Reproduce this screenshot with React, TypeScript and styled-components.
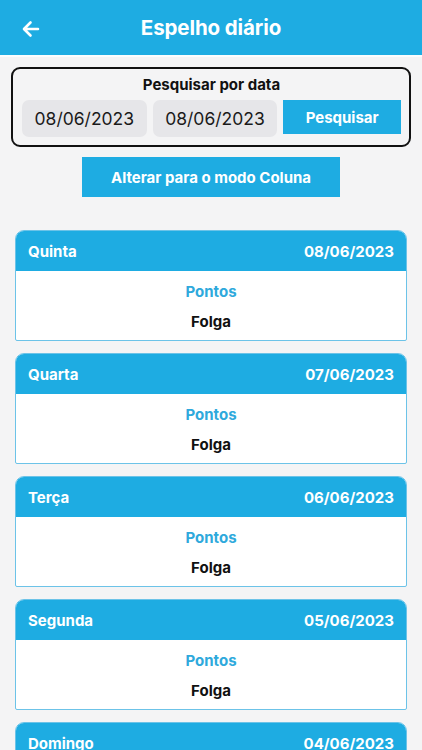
import styled, { createGlobalStyle } from "styled-components";
import React from "react";

const GlobalStyle = createGlobalStyle`
  html, body {
    margin: 0;
    padding: 0;
    background: #f4f4f5;
    overflow: hidden;
  }
  * {
    box-sizing: border-box;
  }
  body {
    font-family: Inter, "Noto Sans", "Liberation Sans", sans-serif;
    -webkit-font-smoothing: antialiased;
  }
`;

const blue = "#1eace2";

const Screen = styled.div`
  height: 750px;
  width: 422px;
  overflow: hidden;
  display: flex;
  flex-direction: column;
  background: #f4f4f5;
`;

const TopBar = styled.header`
  height: 57px;
  flex-shrink: 0;
  background: ${blue};
  border-bottom: 2px solid #fbfdfe;
  position: relative;
  display: flex;
  align-items: center;
  justify-content: center;
  h1 {
    margin: 0;
    color: #fff;
    font-size: 20.5px;
    font-weight: 700;
    letter-spacing: -0.1px;
  }
`;

const BackButton = styled.button`
  position: absolute;
  left: 19px;
  top: 17px;
  width: 24px;
  height: 24px;
  padding: 0;
  border: none;
  background: none;
  display: flex;
  align-items: center;
  justify-content: center;
`;

const Content = styled.main`
  display: flex;
  flex-direction: column;
  align-items: center;
  padding: 10px 11px 0;
`;

const SearchBox = styled.section`
  width: 400px;
  border: 2px solid #111;
  border-radius: 9px;
  padding: 6px 8px 8px 9px;
  display: flex;
  flex-direction: column;
  gap: 5px;
  h3 {
    margin: 0;
    text-align: center;
    font-size: 15px;
    font-weight: 700;
    color: #111;
    line-height: 20px;
  }
`;

const SearchRow = styled.div`
  display: flex;
  align-items: flex-start;
  gap: 6px;
`;

const DateInput = styled.div`
  width: 125px;
  height: 37px;
  border-radius: 7px;
  background: #e6e6e9;
  display: flex;
  align-items: center;
  justify-content: center;
  font-size: 17.5px;
  color: #1a1a1a;
`;

const BlueButton = styled.button<{ $width: number; $height: number }>`
  width: ${(p) => p.$width}px;
  height: ${(p) => p.$height}px;
  border: none;
  border-radius: 0;
  background: ${blue};
  color: #fff;
  font-family: inherit;
  font-size: 15px;
  font-weight: 700;
  padding: 0;
`;

const ModeButton = styled(BlueButton)`
  margin-top: 10px;
  margin-bottom: 33px;
`;

const CardList = styled.div`
  display: flex;
  flex-direction: column;
  gap: 12px;
  width: 392px;
`;

const Card = styled.article`
  border: 1.5px solid #6cc3e8;
  border-radius: 9px 9px 2px 2px;
  overflow: hidden;
  background: #fff;
`;

const CardHeader = styled.div`
  height: 40px;
  background: ${blue};
  display: flex;
  align-items: center;
  justify-content: space-between;
  padding: 0 12px 0 12px;
  color: #fff;
  font-size: 15px;
  font-weight: 700;
`;

const CardBody = styled.div`
  height: 69px;
  display: flex;
  flex-direction: column;
  align-items: center;
  padding-top: 11px;
  gap: 10px;
  font-size: 15px;
  font-weight: 700;
  line-height: 20px;
`;

const Label = styled.span`
  color: #2ea9dc;
`;

const Value = styled.span`
  color: #111;
`;

const days = [
  { day: "Quinta", date: "08/06/2023" },
  { day: "Quarta", date: "07/06/2023" },
  { day: "Terça", date: "06/06/2023" },
  { day: "Segunda", date: "05/06/2023" },
  { day: "Domingo", date: "04/06/2023" },
];

const App: React.FC = () => {
  return (
    <Screen>
      <GlobalStyle />
      <TopBar>
        <BackButton>
          <svg width="20" height="20" viewBox="0 0 20 20" fill="none">
            <path
              d="M17 10H3.5M9.5 3.5L3 10l6.5 6.5"
              stroke="#fff"
              strokeWidth="2.6"
              strokeLinecap="round"
              strokeLinejoin="round"
            />
          </svg>
        </BackButton>
        <h1>Espelho diário</h1>
      </TopBar>
      <Content>
        <SearchBox>
          <h3>Pesquisar por data</h3>
          <SearchRow>
            <DateInput>08/06/2023</DateInput>
            <DateInput>08/06/2023</DateInput>
            <BlueButton $width={118} $height={34}>
              Pesquisar
            </BlueButton>
          </SearchRow>
        </SearchBox>
        <ModeButton $width={258} $height={40}>
          Alterar para o modo Coluna
        </ModeButton>
        <CardList>
          {days.map((d) => (
            <Card key={d.date}>
              <CardHeader>
                <span>{d.day}</span>
                <span>{d.date}</span>
              </CardHeader>
              <CardBody>
                <Label>Pontos</Label>
                <Value>Folga</Value>
              </CardBody>
            </Card>
          ))}
        </CardList>
      </Content>
    </Screen>
  );
};

export default App;
